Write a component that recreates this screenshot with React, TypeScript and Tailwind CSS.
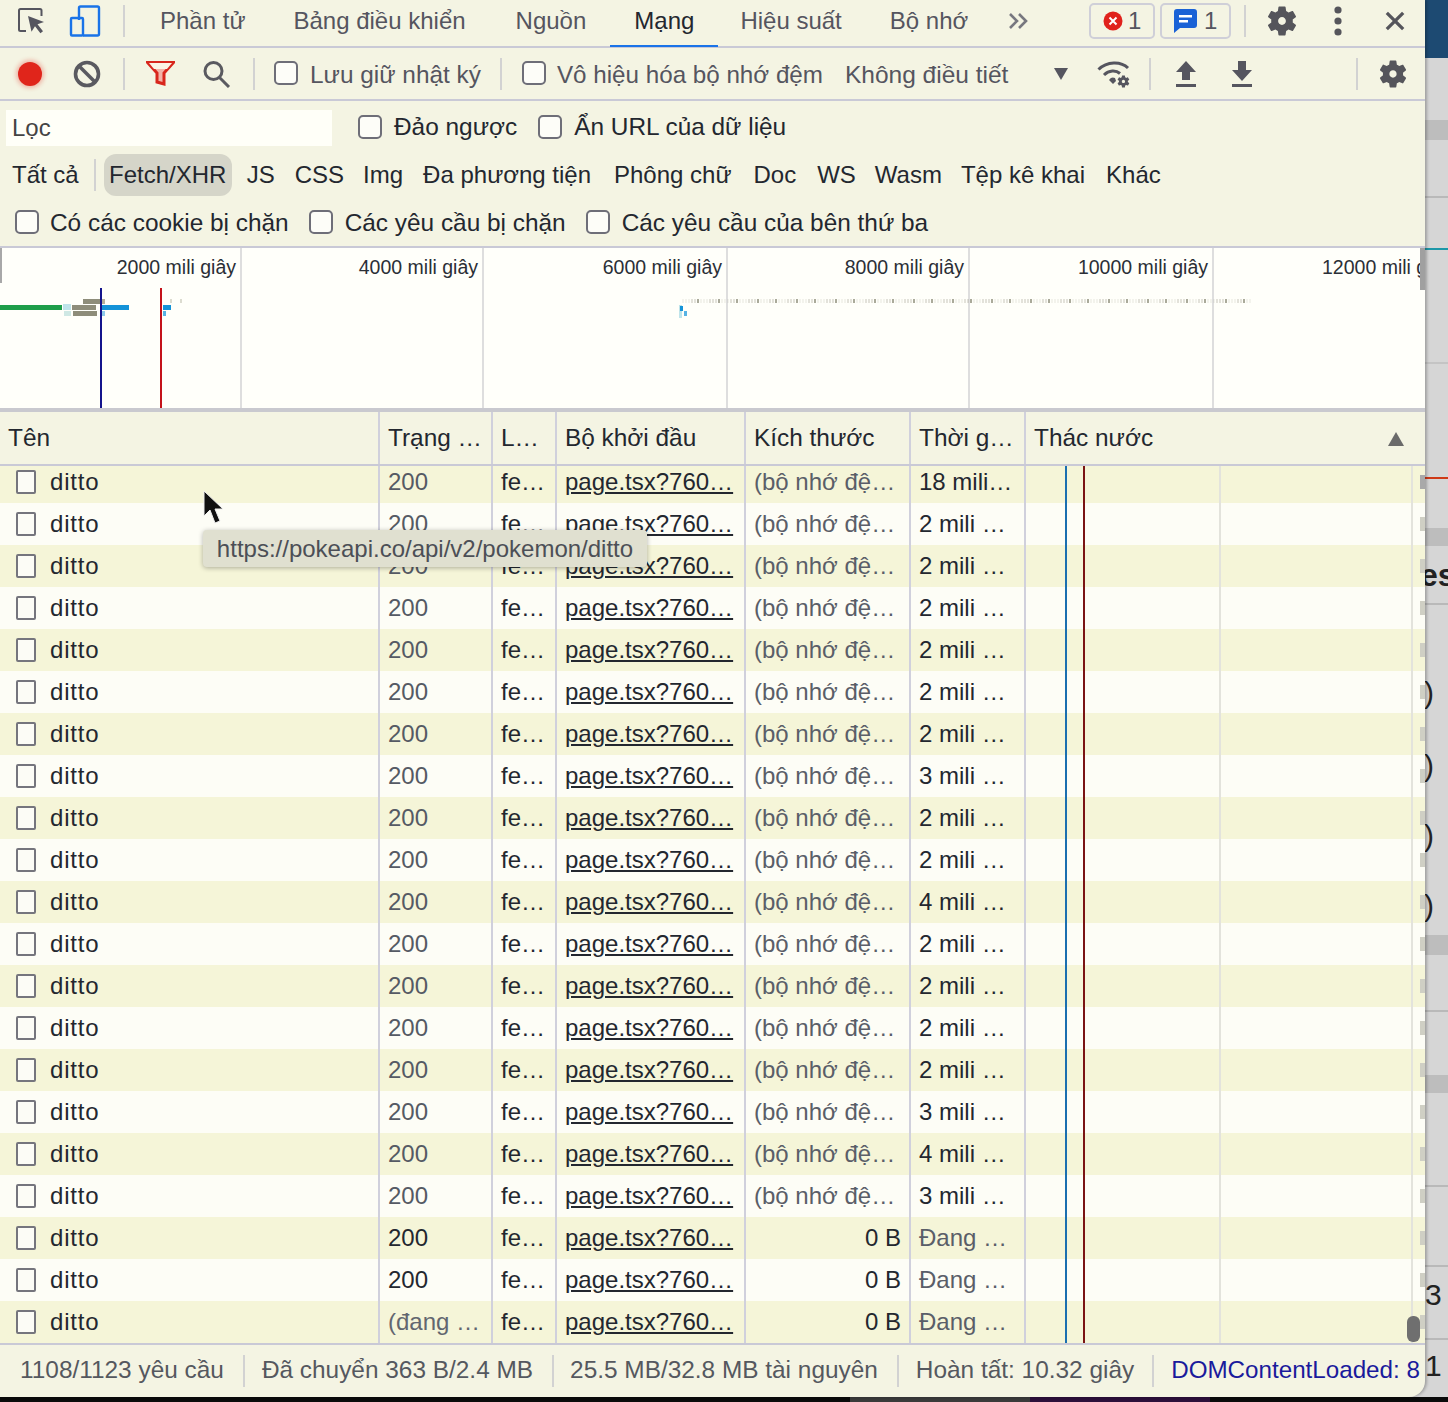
import React from "react";

const GEAR = "M19.14,12.94c0.04-0.3,0.06-0.61,0.06-0.94c0-0.32-0.02-0.64-0.07-0.94l2.03-1.58c0.18-0.14,0.23-0.41,0.12-0.61 l-1.92-3.32c-0.12-0.22-0.37-0.29-0.59-0.22l-2.39,0.96c-0.5-0.38-1.03-0.7-1.62-0.94L14.4,2.81c-0.04-0.24-0.24-0.41-0.48-0.41 h-3.84c-0.24,0-0.43,0.17-0.47,0.41L9.25,5.35C8.66,5.59,8.12,5.92,7.63,6.29L5.24,5.33c-0.22-0.08-0.47,0-0.59,0.22L2.74,8.87 C2.62,9.08,2.66,9.34,2.86,9.48l2.03,1.58C4.84,11.36,4.8,11.69,4.8,12s0.02,0.64,0.07,0.94l-2.03,1.58 c-0.18,0.14-0.23,0.41-0.12,0.61l1.92,3.32c0.12,0.22,0.37,0.29,0.59,0.22l2.39-0.96c0.5,0.38,1.03,0.7,1.62,0.94l0.36,2.54 c0.05,0.24,0.24,0.41,0.48,0.41h3.84c0.24,0,0.44-0.17,0.47-0.41l0.36-2.54c0.59-0.24,1.13-0.56,1.62-0.94l2.39,0.96 c0.22,0.08,0.47,0,0.59-0.22l1.92-3.32c0.12-0.22,0.07-0.47-0.12-0.61L19.14,12.94z M12,14.6c-1.43,0-2.6-1.17-2.6-2.6 s1.17-2.6,2.6-2.6s2.6,1.17,2.6,2.6S13.43,14.6,12,14.6z";

const Gear = ({ size = 30 }: { size?: number }) => (
  <svg width={size} height={size} viewBox="2 2 20 20" fill="#55555b"><path d={GEAR} /></svg>
);

const Sep = ({ ml, mr = 0, h = "h-[32px]" }: { ml: number; mr?: number; h?: string }) => (
  <span className={`w-[2px] ${h} bg-[#d2d2d2] shrink-0`} style={{ marginLeft: ml, marginRight: mr }} />
);

const Check = ({ ml, label, gap = 12, pt = 0, fs = "text-[24.4px]" }: { ml: number; label: string; gap?: number; pt?: number; fs?: string }) => (
  <label className="flex items-center shrink-0" style={{ marginLeft: ml }}>
    <input type="checkbox" className="appearance-none w-[24px] h-[24px] rounded-[5px] border-2 border-[#6e6e78] bg-[#fdfdf8] shrink-0" />
    <span className={`whitespace-nowrap ${fs}`} style={{ marginLeft: gap, paddingTop: pt }}>{label}</span>
  </label>
);

const TABS: [string, string][] = [["Phần tử", ""], ["Bảng điều khiển", ""], ["Nguồn", "ml-[2px]"], ["Mạng", ""], ["Hiệu suất", "-ml-[2px]"], ["Bộ nhớ", ""]];
const FILTERS: [string, number][] = [["JS", 15], ["CSS", 20], ["Img", 19], ["Đa phương tiện", 20], ["Phông chữ", 23], ["Doc", 22], ["WS", 21], ["Wasm", 19], ["Tệp kê khai", 19], ["Khác", 21]];
const TIMES = ["18 mili…", "2 mili …", "2 mili …", "2 mili …", "2 mili …", "2 mili …", "2 mili …", "3 mili …", "2 mili …", "2 mili …", "4 mili …", "2 mili …", "2 mili …", "2 mili …", "2 mili …", "3 mili …", "4 mili …", "3 mili …", "Đang …", "Đang …", "Đang …"];
const COLS = "grid grid-cols-[380px_113px_64px_189px_165px_115px_399px]";
const CELL = "border-r-2 border-[#d0d0dc] pl-2 whitespace-nowrap overflow-hidden flex items-center h-full";

const OVERVIEW = [
  { w: 242, label: "2000 mili giây" },
  { w: 242, label: "4000 mili giây" },
  { w: 244, label: "6000 mili giây" },
  { w: 242, label: "8000 mili giây" },
  { w: 244, label: "10000 mili giây" },
  { w: 211, label: "12000 mili giây" },
];

const dots = Array.from({ length: 190 }, (_, i) => {
  const x = 682 + i * 3;
  const seed = (i * 37 + 11) % 13;
  return { x, o: seed < 2 ? 0.75 : seed < 7 ? 0.25 : 0.1 };
});

const STRIP: { h: number; cls?: string; text?: string; tc?: string }[] = [
  { h: 58, cls: "bg-[#1d4a72]" },
  { h: 62 },
  { h: 20, cls: "bg-[#bdbdbd]" },
  { h: 56 },
  { h: 2, cls: "bg-[#b9b9b9]" },
  { h: 50 },
  { h: 2, cls: "bg-[#1d97a8]" },
  { h: 112 },
  { h: 2, cls: "bg-[#c4c4c4]" },
  { h: 113 },
  { h: 2, cls: "bg-[#cf3a17]" },
  { h: 49 },
  { h: 18, cls: "bg-[#bdbdbd]" },
  { h: 12 },
  { h: 34, text: "es", tc: "font-bold -ml-[5px] text-[32px]" },
  { h: 11 },
  { h: 2, cls: "bg-[#b9b9b9]" },
  { h: 72 },
  { h: 30, text: ")", tc: "-ml-[1px]" },
  { h: 43 },
  { h: 30, text: ")", tc: "-ml-[1px]" },
  { h: 40 },
  { h: 30, text: ")", tc: "-ml-[1px]" },
  { h: 40 },
  { h: 30, text: ")", tc: "-ml-[1px]" },
  { h: 15 },
  { h: 20, cls: "bg-[#bdbdbd]" },
  { h: 55 },
  { h: 2, cls: "bg-[#b9b9b9]" },
  { h: 63 },
  { h: 18, cls: "bg-[#bdbdbd]" },
  { h: 92 },
  { h: 2, cls: "bg-[#b9b9b9]" },
  { h: 78 },
  { h: 2, cls: "bg-[#b9b9b9]" },
  { h: 12 },
  { h: 30, text: "3", tc: "" },
  { h: 29 },
  { h: 2, cls: "bg-[#b9b9b9]" },
  { h: 10 },
  { h: 30, text: "1", tc: "" },
];

export default function App() {
  return (
    <div className="w-[1448px] h-[1402px] overflow-hidden bg-[#d6d6d6] flex flex-col font-['Liberation_Sans',Arial,sans-serif] text-[24px] text-[#23272f]">
      <div className="flex h-[1397px]">
        <div className="relative w-[1425px] h-full flex flex-col bg-[#f4f4e3] rounded-br-[16px] overflow-hidden shrink-0 z-10 shadow-[2px_0_3px_rgba(0,0,0,0.25)]">
          {/* Tabs */}
          <div className="h-[48px] shrink-0 flex items-center border-b-2 border-[#c9c9d6] relative text-[#55555f] pb-[4px]">
            <svg className="ml-[17px] shrink-0" width="30" height="28" viewBox="0 0 30 28" fill="none">
              <path d="M11 2H3.5A1.5 1.5 0 0 0 2 3.5v19A1.5 1.5 0 0 0 3.5 24H9" stroke="#55555f" strokeWidth="2" />
              <path d="M11 2h12a1.5 1.5 0 0 1 1.5 1.5V9" stroke="#55555f" strokeWidth="2" />
              <path d="M11 9l16 6-6.5 2.2 5.5 7-2.6 2-5.4-7-3.5 5.5z" fill="#55555f" />
            </svg>
            <svg className="ml-[22px] shrink-0" width="32" height="32" viewBox="0 0 32 32" fill="none" stroke="#1a73e8" strokeWidth="2.4">
              <path d="M10 15V3a1.5 1.5 0 0 1 1.5-1.5h17A1.5 1.5 0 0 1 30 3v26a1.5 1.5 0 0 1-1.5 1.5H14" />
              <rect x="2" y="13" width="12" height="17.5" rx="1" />
            </svg>
            <Sep ml={22} />
            <div className="ml-[11px] flex self-start h-[47px]">
              {TABS.map(([t, extra]) => (
                <div key={t} className={`px-6 h-[47px] flex items-center whitespace-nowrap border-b-2 pb-[4px] ${extra} ${t === "Mạng" ? "text-[#23272f] border-[#1a73e8]" : "border-transparent"}`}>{t}</div>
              ))}
            </div>
            <svg className="ml-[16px] shrink-0" width="20" height="18" viewBox="0 0 20 18" fill="none" stroke="#77777f" strokeWidth="2.6"><path d="M2 2l7 7-7 7M11 2l7 7-7 7" /></svg>
            <div className="ml-[61px] w-[66px] h-[36px] rounded-[5px] border-2 border-[#cfcfd8] flex items-center justify-center gap-[5px] shrink-0">
              <svg width="20" height="20" viewBox="0 0 20 20"><circle cx="10" cy="10" r="9.5" fill="#e0221c" /><path d="M6.5 6.5l7 7M13.5 6.5l-7 7" stroke="#fff" strokeWidth="2" /></svg>
              <span>1</span>
            </div>
            <div className="ml-[5px] w-[71px] h-[36px] rounded-[5px] border-2 border-[#cfcfd8] flex items-center justify-center gap-[7px] shrink-0">
              <svg width="23" height="24" viewBox="0 0 23 24"><path d="M3 0h17a3 3 0 0 1 3 3v13a3 3 0 0 1-3 3H6l-6 5V3a3 3 0 0 1 3-3z" fill="#1a62d6" /><path d="M5 6h13v2.4H5zM5 11h9v2.4H5z" fill="#fff" /></svg>
              <span>1</span>
            </div>
            <Sep ml={13} />
            <span className="ml-[21px] shrink-0"><Gear size={30} /></span>
            <svg className="ml-[37px] shrink-0" width="8" height="32" viewBox="0 0 8 32" fill="#55555b"><circle cx="4" cy="5" r="3.6" /><circle cx="4" cy="16" r="3.6" /><circle cx="4" cy="27" r="3.6" /></svg>
            <svg className="ml-[43px] shrink-0" width="20" height="20" viewBox="0 0 22 22" stroke="#55555b" strokeWidth="3.6"><path d="M2 2l18 18M20 2L2 20" /></svg>
          </div>

          {/* Recording toolbar */}
          <div className="h-[53px] shrink-0 flex items-center border-b-2 border-[#c9c9d6] text-[#55555f]">
            <span className="ml-[18px] w-[24px] h-[24px] rounded-full bg-[#e0251b] shadow-[0_0_4px_2px_rgba(224,37,27,0.3)] shrink-0" />
            <svg className="ml-[31px] shrink-0" width="28" height="28" viewBox="0 0 28 28" fill="none" stroke="#5a5a60" strokeWidth="3.6"><circle cx="14" cy="14" r="11.5" /><path d="M6 6l16 16" /></svg>
            <Sep ml={22} />
            <svg className="ml-[21px] shrink-0" width="29" height="25" viewBox="0 0 29 25"><path d="M1.5 1.5h26L18 12v11l-7-2v-9z" fill="#f3b3a8" stroke="#d8261c" strokeWidth="3" /><path d="M3 2h23l-5 6H8z" fill="#fbf3e4" /></svg>
            <svg className="ml-[27px] shrink-0" width="29" height="28" viewBox="0 0 29 28" fill="none" stroke="#5a5a60" strokeWidth="3"><circle cx="11.5" cy="11" r="8.5" /><path d="M17.5 17.5L27 27" /></svg>
            <Sep ml={22} />
            <Check ml={19} label="Lưu giữ nhật ký" pt={3} />
            <Sep ml={19} />
            <Check ml={20} label="Vô hiệu hóa bộ nhớ đệm" gap={11} pt={3} fs="text-[24.2px]" />
            <span className="ml-[22px] whitespace-nowrap pt-[3px] text-[24.5px]">Không điều tiết</span>
            <svg className="ml-[46px] shrink-0" width="14" height="12" viewBox="0 0 14 12" fill="#55555f"><path d="M0 0h14L7 12z" /></svg>
            <svg className="ml-[29px] shrink-0" width="34" height="30" viewBox="0 0 34 30" fill="none" stroke="#55555f" strokeWidth="3"><path d="M1.500 10.500C10 2 24 2 31 9" /><path d="M7 16c5-5 12-5 16-1.500" /><path d="M12 21l4 4 3-3-1-3c-2-1-4-1-6 2z" fill="#55555f" stroke="none" /><g transform="translate(19 15) scale(0.62)" stroke="none" fill="#55555f"><path d={GEAR} /></g></svg>
            <Sep ml={18} />
            <svg className="ml-[25px] shrink-0" width="20" height="26" viewBox="0 0 20 26" fill="#55555f"><path d="M10 0l10 11h-6v8H6v-8H0z" /><rect y="23" width="20" height="3" /></svg>
            <svg className="ml-[36px] shrink-0" width="20" height="26" viewBox="0 0 20 26" fill="#55555f"><path d="M6 0h8v9h6L10 20 0 9h6z" /><rect y="23" width="20" height="3" /></svg>
            <Sep ml={104} />
            <span className="ml-[21px] shrink-0"><Gear size={28} /></span>
          </div>

          {/* Filter input row */}
          <div className="h-[53px] shrink-0 flex items-center">
            <div className="ml-[6px] w-[326px] h-[36px] mt-[1px] bg-[#fffff8] flex items-center pl-[6px] text-[#444] shrink-0">Lọc</div>
            <Check ml={26} label="Đảo ngược" />
            <Check ml={21} label="Ẩn URL của dữ liệu" />
          </div>

          {/* Type filter row */}
          <div className="h-[42px] shrink-0 flex items-center">
            <span className="ml-[12px] whitespace-nowrap">Tất cả</span>
            <Sep ml={15} h="h-[32px]" />
            <span className="ml-[8px] h-[42px] w-[128px] flex items-center justify-center rounded-[12px] bg-[#d5d5c9] whitespace-nowrap">Fetch/XHR</span>
            {FILTERS.map(([f, m]) => (
              <span key={f} className="whitespace-nowrap" style={{ marginLeft: m }}>{f}</span>
            ))}
          </div>

          {/* Checks row */}
          <div className="h-[52px] shrink-0 flex items-center border-b-2 border-[#c9c9d6] pt-[2px]">
            <Check ml={15} label="Có các cookie bị chặn" gap={11} pt={2} />
            <Check ml={20} label="Các yêu cầu bị chặn" pt={2} />
            <Check ml={20} label="Các yêu cầu của bên thứ ba" pt={2} />
          </div>

          {/* Overview */}
          <div className="relative h-[160px] shrink-0 bg-[#fffffa] flex">
            {OVERVIEW.map((o, i) => (
              <div key={o.label} className={`h-full shrink-0 flex overflow-hidden ${i < 5 ? "justify-end pr-[4px] border-r-2 border-[#dedede]" : "pl-[108px]"}`} style={{ width: o.w }}>
                <span className="text-[19.5px] leading-[39px] h-[39px] whitespace-nowrap text-[#2b2f36] shrink-0">{o.label}</span>
              </div>
            ))}
            <svg className="absolute inset-0 pointer-events-none" width="1425" height="160" viewBox="0 248 1425 160">
              <rect x="0" y="248" width="2" height="35" fill="#a8a8a8" />
              <rect x="1420" y="248" width="5" height="42" fill="#a0a0a0" />
              <rect x="0" y="305" width="62" height="5" fill="#1e9e4a" />
              <rect x="63" y="304" width="8" height="6" fill="#bfe4ea" />
              <rect x="72" y="305" width="24" height="5" fill="#8e8d7a" />
              <rect x="83" y="299" width="18" height="5" fill="#8e8d7a" />
              <rect x="101" y="299" width="4" height="5" fill="#b5b09a" />
              <rect x="102" y="305" width="27" height="5" fill="#1493d8" />
              <rect x="64" y="311" width="7" height="5" fill="#cfe8e4" />
              <rect x="73" y="311" width="24" height="5" fill="#8e8d7a" />
              <rect x="102" y="311" width="3" height="5" fill="#8fcbea" />
              <rect x="100" y="288" width="2" height="120" fill="#14148c" />
              <rect x="160" y="288" width="2" height="120" fill="#c4121a" />
              <rect x="163" y="305" width="8" height="5" fill="#1493d8" />
              <rect x="163" y="311" width="3" height="5" fill="#57b3e4" />
              <rect x="170" y="299" width="2" height="4" fill="#dcdcd0" />
              <rect x="180" y="299" width="2" height="4" fill="#dcdcd0" />
              <rect x="679" y="305" width="3" height="13" fill="#bfe4ea" />
              <rect x="680" y="306" width="3" height="5" fill="#1493d8" />
              <rect x="684" y="311" width="3" height="5" fill="#57b3e4" />
              {dots.map((d) => (
                <rect key={d.x} x={d.x} y="299" width="2" height="4" fill="#8e8d7a" opacity={d.o} />
              ))}
            </svg>
          </div>

          {/* Table header */}
          <div className={`${COLS} h-[58px] shrink-0 border-t-4 border-b-2 border-t-[#c9c9cf] border-b-[#c9c9d6] text-[24.4px]`}>
            {["Tên", "Trạng …", "L…", "Bộ khởi đầu", "Kích thước", "Thời g…"].map((h) => (
              <div key={h} className={`${CELL} pt-[1px]`}>{h}</div>
            ))}
            <div className="pl-2 flex items-center justify-between pr-[21px] h-full pt-[1px]">
              <span>Thác nước</span>
              <svg width="16" height="14" viewBox="0 0 16 14" fill="#6a6a6a"><path d="M8 0l8 14H0z" /></svg>
            </div>
          </div>

          {/* Table body */}
          <div className="relative flex-1 min-h-0 overflow-hidden flex flex-col justify-end">
            {TIMES.map((t, i) => {
              const loading = t === "Đang …";
              return (
                <div key={i} className={`${COLS} h-[42px] shrink-0 ${i % 2 === 0 ? "bg-[#f5f5d8]" : "bg-[#fdfdf6]"}`}>
                  <div className={`${CELL} !pl-0`}>
                    <span className="ml-[16px] w-[20px] h-[24px] rounded-[2px] border-2 border-[#75757d] bg-[#fcfcf6] shrink-0" />
                    <span className="ml-[14px] tracking-[0.8px]">ditto</span>
                  </div>
                  <div className={`${CELL} ${i < 18 ? "text-[#555a64]" : i === 20 ? "text-[#62666f]" : ""}`}>{i === 20 ? "(đang …" : "200"}</div>
                  <div className={CELL}>fe…</div>
                  <div className={CELL}><span className="underline decoration-2 underline-offset-2">page.tsx?760…</span></div>
                  <div className={`${CELL} ${loading ? "justify-end pr-[8px]" : "text-[#5a5e68]"}`}>{loading ? "0 B" : "(bộ nhớ đệ…"}</div>
                  <div className={`${CELL} ${loading ? "text-[#5a5e68]" : ""}`}>{t}</div>
                  <div className="h-full flex items-center justify-end">
                    <span className={`w-[5px] h-[14px] ${i === 0 ? "bg-[#a9a9a9]" : "bg-[#cfcfc4]"}`} />
                  </div>
                </div>
              );
            })}
            <span className="absolute top-0 bottom-0 left-[1065px] w-[2px] bg-[#1b6fb0]" />
            <span className="absolute top-0 bottom-0 left-[1083px] w-[2px] bg-[#7a1414]" />
            <span className="absolute top-0 bottom-0 left-[1219px] w-[2px] bg-[#e3e3dc]" />
            <span className="absolute top-0 bottom-0 left-[1411px] w-[2px] bg-[#e3e3dc]" />
            <span className="absolute left-[1407px] top-[850px] w-[13px] h-[26px] rounded-[6px] bg-[#6f6f6f]" />
          </div>

          {/* Status bar */}
          <div className="h-[54px] shrink-0 flex items-center border-t-2 border-[#c9c9d6] text-[#55585f] text-[24.4px] pb-[1px]">
            <span className="ml-[20px] whitespace-nowrap">1108/1123 yêu cầu</span>
            <Sep ml={19} />
            <span className="ml-[17px] whitespace-nowrap">Đã chuyển 363 B/2.4 MB</span>
            <Sep ml={19} />
            <span className="ml-[16px] whitespace-nowrap">25.5 MB/32.8 MB tài nguyên</span>
            <Sep ml={19} />
            <span className="ml-[17px] whitespace-nowrap">Hoàn tất: 10.32 giây</span>
            <Sep ml={18} />
            <span className="ml-[17px] whitespace-nowrap text-[#1a1a9c] text-[24.2px]">DOMContentLoaded: 8</span>
          </div>

          {/* Tooltip + cursor */}
          <div className="absolute left-[203px] top-[530px] h-[37px] w-[444px] flex items-center justify-center rounded-[4px] bg-[#e0e0d0] text-[#4c4f56] text-[24px] whitespace-nowrap shadow-[0_1px_5px_rgba(0,0,0,0.3)]">https://pokeapi.co/api/v2/pokemon/ditto</div>
          <svg className="absolute left-[203px] top-[490px]" width="20" height="35" viewBox="0 0 20 35"><path d="M1 1v25l6-6 5 13 5-2-5-12h8z" fill="#111" stroke="#eee" strokeWidth="1" /></svg>
        </div>

        {/* Page behind the panel */}
        <div className="w-[23px] h-full overflow-hidden flex flex-col shrink-0 text-[30px] text-[#222]">
          {STRIP.map((s, i) => (
            <div key={i} className={`shrink-0 flex items-center ${s.cls ?? ""}`} style={{ height: s.h }}>
              {s.text && <span className={s.tc}>{s.text}</span>}
            </div>
          ))}
        </div>
      </div>
      <div className="h-[5px] flex shrink-0">
        <span className="w-[850px] bg-[#0a0a0a]" />
        <span className="w-[180px] bg-[#3a3a3a]" />
        <span className="w-[180px] bg-[#2c0f3a]" />
        <span className="w-[238px] bg-[#0a0a0a]" />
      </div>
    </div>
  );
}
